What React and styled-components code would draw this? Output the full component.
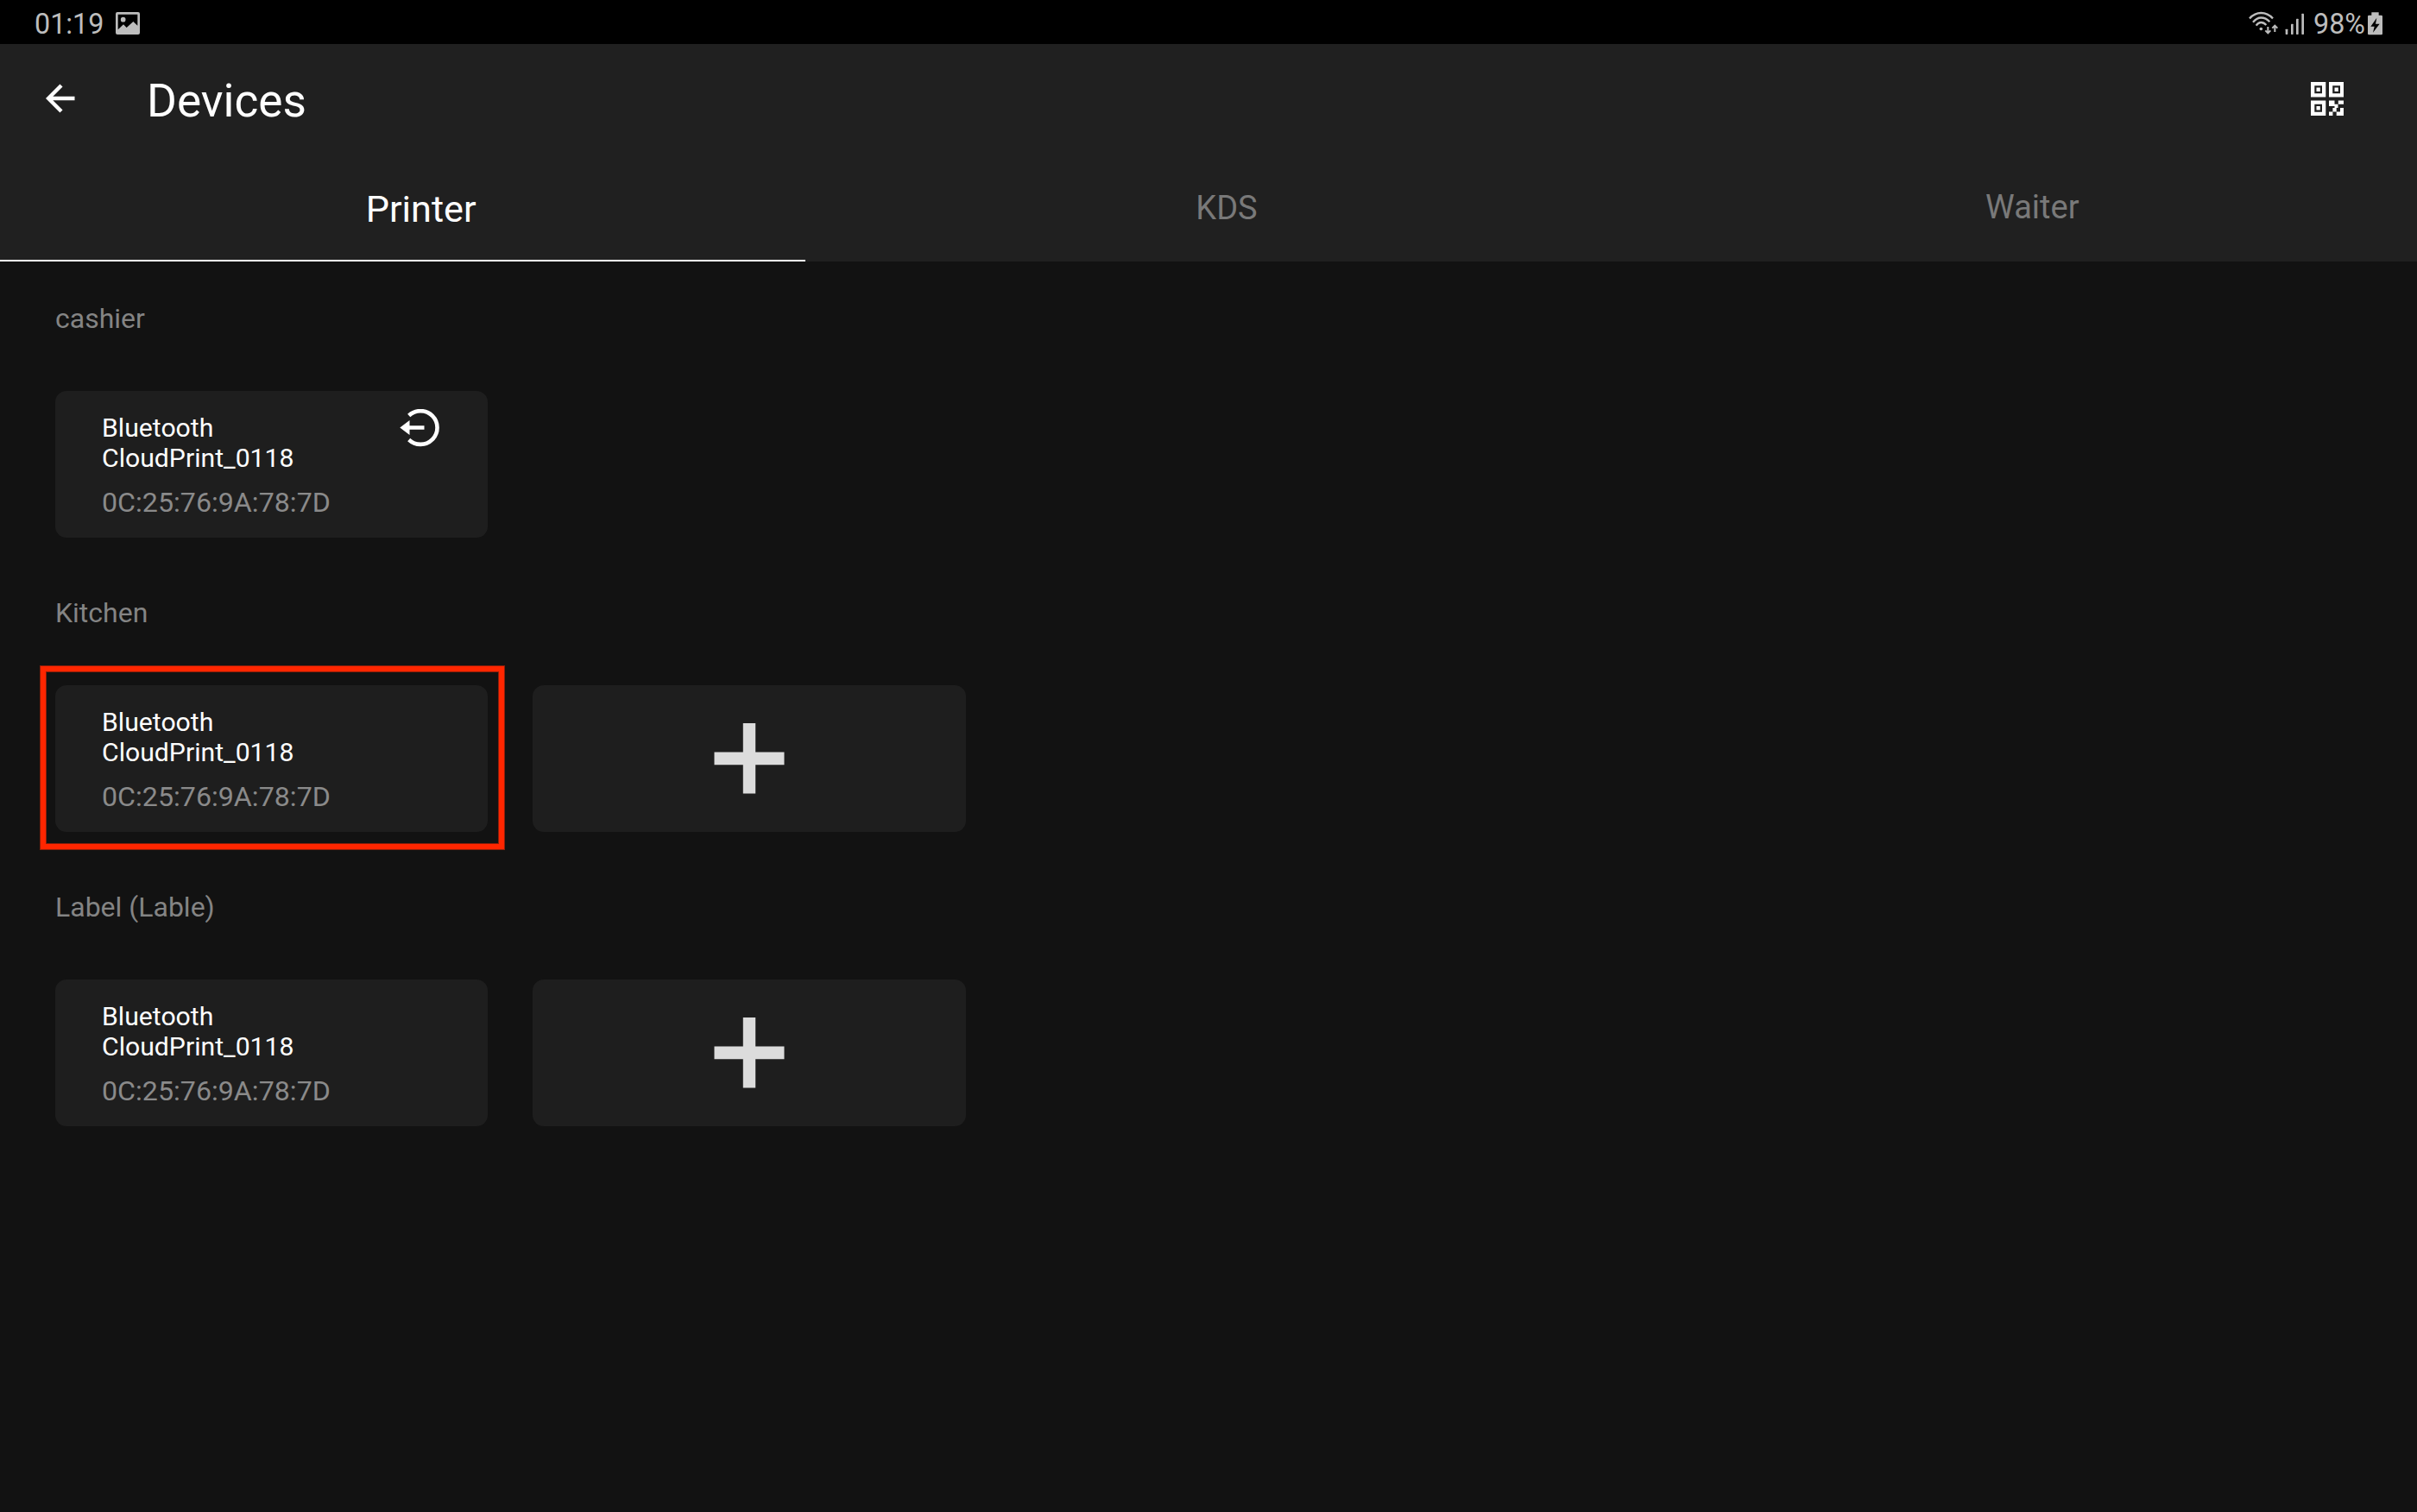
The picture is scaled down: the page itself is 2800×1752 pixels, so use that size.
import React from "react";
import styled, { createGlobalStyle } from "styled-components";

const PRINTER = { name: "Bluetooth CloudPrint_0118", mac: "0C:25:76:9A:78:7D" };

const TABS = [
    { label: "Printer", top: 36 },
    { label: "KDS", top: 34 },
    { label: "Waiter", top: 33 },
];

const SECTIONS = [
    { title: "cashier", canReturn: true },
    { title: "Kitchen", canAdd: true, marked: true },
    { title: "Label (Lable)", canAdd: true },
];

const ImageIcon = () => (
    <svg width="28" height="26" viewBox="0 0 84 78">
        <path
            fill="#bdbdbd"
            fillRule="evenodd"
            d="M6 0H78Q84 0 84 6V72Q84 78 78 78H6Q0 78 0 72V6Q0 0 6 0ZM8 8V61L27 43L38 54L61 33L76 47V8Z"
        />
        <circle cx="26" cy="26" r="8.5" fill="#bdbdbd" />
    </svg>
);

const WifiIcon = () => (
    <svg width="35" height="28" viewBox="75 36 105 84" fill="none" stroke="#bdbdbd" strokeWidth="7">
        <path d="M78 61Q96 42 118 42Q141 42 159 61" />
        <path d="M90 74Q103 58.500 118 58.500Q135 58.500 148 73" />
        <path d="M101 86Q109 75 118 75Q128 75 136 84" />
        <circle cx="118" cy="97.500" r="5.500" fill="#bdbdbd" stroke="none" />
        <path strokeWidth="6" d="M142 90V112M133 103L142 112L151 103" />
        <path strokeWidth="6" d="M166 108V86M157 95L166 86L175 95" />
    </svg>
);

const SignalIcon = () => (
    <svg width="23" height="28" viewBox="201 36 69 84" fill="#bdbdbd">
        <rect x="203" y="98" width="8" height="19" rx="2" />
        <rect x="222" y="80" width="8" height="37" rx="2" />
        <rect x="240" y="62" width="8" height="55" rx="2" />
        <rect x="259" y="44" width="8" height="73" rx="2" />
    </svg>
);

const BatteryIcon = () => (
    <svg width="17" height="27" viewBox="489 38 51 81">
        <path
            fill="#bdbdbd"
            d="M502 39H527V49H536Q540 49 540 53V113Q540 117 536 117H493Q489 117 489 113V53Q489 49 493 49H502Z"
        />
        <path fill="#000" d="M520 58L499 88H512L507 109L530 79H516Z" />
    </svg>
);

const BackIcon = () => (
    <svg width="34" height="34" viewBox="0 0 34 34" fill="none" stroke="#fff" strokeWidth="4.4">
        <path d="M33.500 17H4M18 2L3 17L18 32" />
    </svg>
);

const QrIcon = () => (
    <svg width="38" height="39" viewBox="0 0 38 39">
        <path
            fill="#fff"
            fillRule="evenodd"
            d="M0 0H17.300V17.600H0ZM4.300 4.300V13.300H13V4.300ZM21 0H38V17.600H21ZM25.200 4.300V13.300H34V4.300ZM0 21.400H17.300V39H0ZM4.300 25.700V34.700H13V25.700Z"
        />
        <path fill="#fff" d="M6.500 6.500h4.300v4.400h-4.300zM27.500 6.500h4.300v4.400h-4.300zM6.500 28h4.300v4.400h-4.300z" />
        <path
            fill="#fff"
            d="M21 21.400H27.500V25.700H31.500V30H29.700V34.500H25.400V39H21V34.500H25.400V30H27.500V28H21ZM31.800 21.400H38V25.700H31.800ZM34 30H38V39H29.700V34.500H34Z"
        />
    </svg>
);

const ReturnIcon = () => (
    <svg width="48" height="44" viewBox="0 0 48 44">
        <path fill="none" stroke="#fff" strokeWidth="4.6" d="M10.700 7.500A19.400 19.400 0 1 1 10.700 35.500" />
        <path fill="#fff" d="M0.300 21.500L11.500 13V19.300H28.500V23.700H11.500V30Z" />
    </svg>
);

const PlusIcon = () => (
    <svg width="82" height="82" viewBox="0 0 82 82" fill="#dcdcdc">
        <path d="M33.800 0H48.200V33.600H81.500V48.200H48.200V81.500H33.800V48.200H0.500V33.600H33.800Z" />
    </svg>
);

const App = () => {
    const [active, setActive] = React.useState(0);

    return (
        <Screen>
            <GlobalStyle />
            <StatusBar>
                <StatusText $width={94}>01:19</StatusText>
                <ImageIcon />
                <StatusRight>
                    <WifiIcon />
                    <SignalIcon />
                    <StatusText $width={63}>98%</StatusText>
                    <BatteryIcon />
                </StatusRight>
            </StatusBar>
            <Header>
                <Toolbar>
                    <BackIcon />
                    <Title>Devices</Title>
                    <QrIcon />
                </Toolbar>
                <Tabs>
                    {TABS.map((tab, idx) => (
                        <Tab
                            key={tab.label}
                            $top={tab.top}
                            $active={idx === active}
                            onClick={() => setActive(idx)}
                        >
                            {tab.label}
                        </Tab>
                    ))}
                </Tabs>
            </Header>
            <Body>
                {SECTIONS.map((section) => (
                    <Section key={section.title}>
                        <SectionTitle>{section.title}</SectionTitle>
                        <Cards>
                            <Card>
                                <Info>
                                    <Name>{PRINTER.name}</Name>
                                    <Mac>{PRINTER.mac}</Mac>
                                </Info>
                                {section.canReturn && <ReturnIcon />}
                                {section.marked && <Marker />}
                            </Card>
                            {section.canAdd && (
                                <AddCard>
                                    <PlusIcon />
                                </AddCard>
                            )}
                        </Cards>
                    </Section>
                ))}
            </Body>
        </Screen>
    );
};

const GlobalStyle = createGlobalStyle`
  * {
    box-sizing: border-box;
  }
  body {
    margin: 0;
    background: #121212;
    font-family: Roboto, "Liberation Sans", sans-serif;
  }
  svg {
    display: block;
    flex-shrink: 0;
  }
`;
const Screen = styled.div`
  width: 100%;
  height: 100vh;
  background: #121212;
  overflow: hidden;
`;
const StatusBar = styled.div`
  display: flex;
  align-items: center;
  height: 51px;
  padding: 3px 40px 0;
  background: #000;
`;
const StatusText = styled.div`
  width: ${props => props.$width}px;
  padding-top: 2px;
  color: #bdbdbd;
  font-size: 32.3px;
  line-height: 46px;
`;
const StatusRight = styled.div`
  display: flex;
  align-items: center;
  margin-left: auto;

  svg + svg {
    margin: 0 10px 0 7px;
  }
`;
const Header = styled.div`
  background: #202020;
`;
const Toolbar = styled.div`
  display: flex;
  align-items: center;
  height: 126px;
  padding: 0 85px 0 53px;
`;
const Title = styled.div`
  flex: 1;
  padding: 6px 0 0 83px;
  color: #fff;
  font-size: 53.2px;
  line-height: 64px;
`;
const Tabs = styled.div`
  display: grid;
  grid-template-columns: repeat(3, 1fr);
  height: 126px;
`;
const Tab = styled.div`
  padding: ${props => props.$top}px 0 0 42px;
  border-bottom: 2px solid ${props => props.$active ? "#fff" : "transparent"};
  color: ${props => props.$active ? "#fff" : "#797979"};
  font-size: ${props => props.$active ? "43.2px" : "38px"};
  line-height: 60px;
  text-align: center;
  cursor: pointer;
`;
const Body = styled.div`
  display: flex;
  flex-direction: column;
  gap: 67px;
  padding: 46px 64px;
`;
const Section = styled.div`
  display: flex;
  flex-direction: column;
  gap: 64px;
`;
const SectionTitle = styled.div`
  color: #848484;
  font-size: 32px;
  line-height: 40px;
`;
const Cards = styled.div`
  display: flex;
  gap: 52px;
`;
const Card = styled.div`
  position: relative;
  display: flex;
  align-items: flex-start;
  justify-content: space-between;
  width: 501px;
  height: 170px;
  padding: 21px 54px 0;
  border-radius: 13px;
  background: #1e1e1e;
`;
const AddCard = styled(Card)`
  align-items: center;
  justify-content: center;
  width: 502px;
  padding: 0;
`;
const Info = styled.div`
  width: 300px;
  padding-top: 4px;
`;
const Name = styled.div`
  color: #fff;
  font-size: 30.2px;
  line-height: 35px;
`;
const Mac = styled.div`
  margin-top: 15px;
  color: #8a8a8a;
  font-size: 32.2px;
  line-height: 38px;
`;
const Marker = styled.div`
  position: absolute;
  top: -22px;
  left: -17px;
  width: 537px;
  height: 212px;
  border: 6px solid #ff2600;
  box-shadow: 0 0 0 1px #8c1e0a, inset 0 0 0 1px #8c1e0a;
`;

export default App;
